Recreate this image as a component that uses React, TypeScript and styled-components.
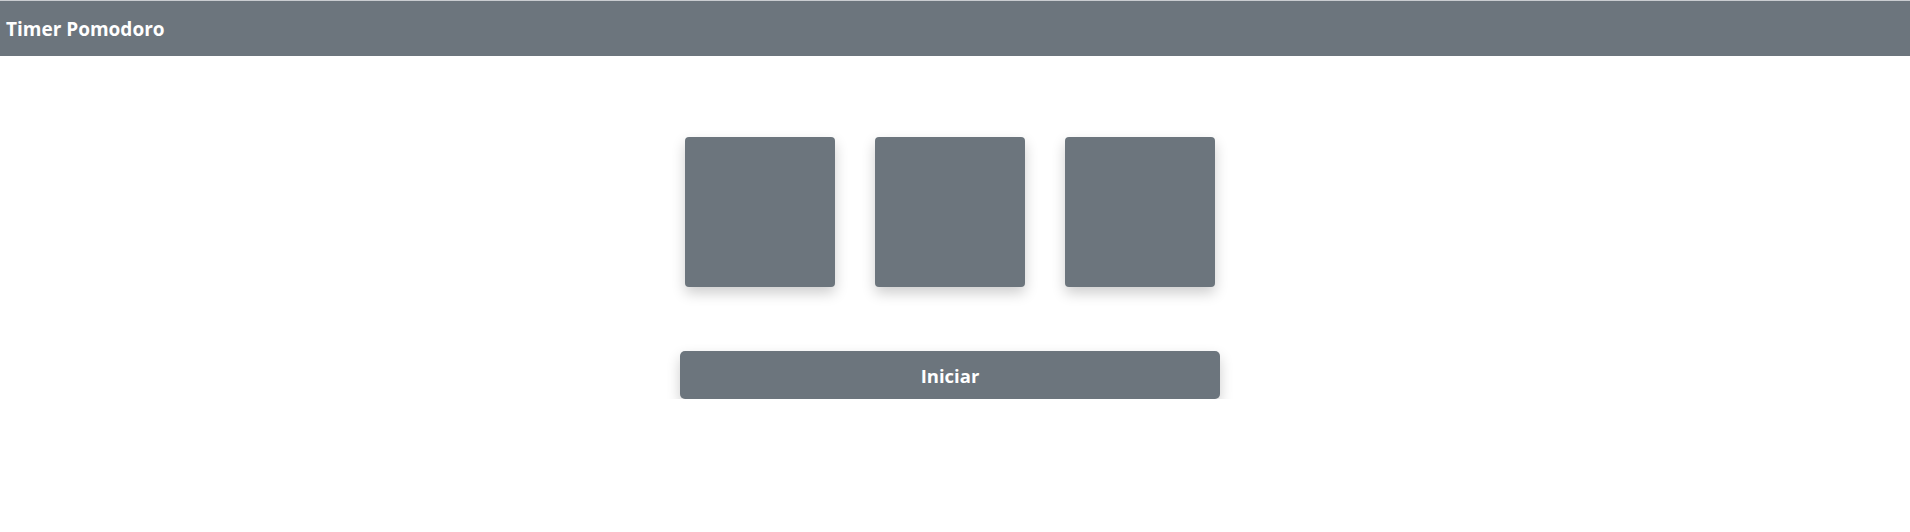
import React from 'react';
import styled, { createGlobalStyle } from 'styled-components';

const GlobalStyle = createGlobalStyle`
  body {
    margin: 0;
    background: #ffffff;
    font-family: "Open Sans", "Noto Sans", sans-serif;
  }
`;

const grey = '#6c757d';

const Header = styled.header`
  display: flex;
  align-items: center;
  height: 55px;
  padding: 0 6px;
  border-top: 1px solid #c9ccd0;
  background: ${grey};
`;

const Title = styled.h1`
  margin: 0;
  color: #ffffff;
  font-size: 19px;
  font-weight: 700;
`;

const Main = styled.main`
  display: flex;
  flex-direction: column;
  align-items: center;
  padding: 81px 10px 0 0;
`;

const Panel = styled.div`
  display: flex;
  flex-direction: column;
  width: 540px;
  gap: 64px;
`;

const Boxes = styled.div`
  display: flex;
  justify-content: center;
  gap: 40px;
`;

const Box = styled.div`
  width: 150px;
  height: 150px;
  border-radius: 4px;
  background: ${grey};
  box-shadow: 0 6px 14px rgba(0, 0, 0, 0.2);
`;

const StartButton = styled.button`
  height: 48px;
  border: none;
  border-radius: 5px;
  background: ${grey};
  color: #ffffff;
  font-family: inherit;
  font-size: 18.5px;
  font-weight: 700;
  box-shadow: 0 6px 14px rgba(0, 0, 0, 0.2);
  cursor: pointer;
`;

export default function App() {
  return (
    <>
      <GlobalStyle />
      <Header>
        <Title>Timer Pomodoro</Title>
      </Header>
      <Main>
        <Panel>
          <Boxes>
            <Box />
            <Box />
            <Box />
          </Boxes>
          <StartButton>Iniciar</StartButton>
        </Panel>
      </Main>
    </>
  );
}
